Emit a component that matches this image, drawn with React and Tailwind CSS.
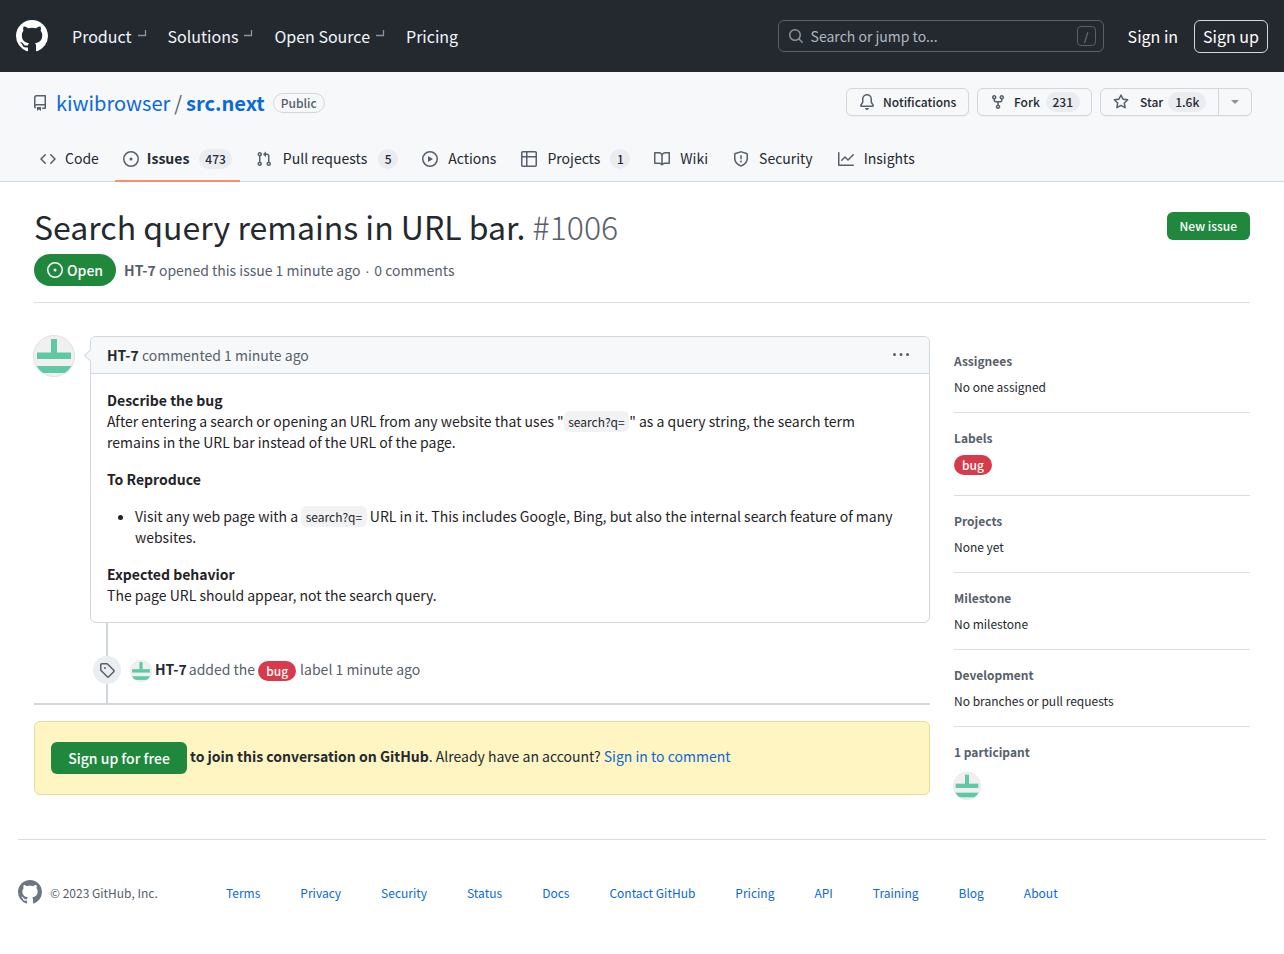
const P = {
  mark: "M8 0c4.42 0 8 3.58 8 8a8.013 8.013 0 0 1-5.45 7.59c-.4.08-.55-.17-.55-.38 0-.27.01-1.13.01-2.2 0-.75-.25-1.23-.54-1.48 1.78-.2 3.65-.88 3.65-3.95 0-.88-.31-1.59-.82-2.15.08-.2.36-1.02-.08-2.12 0 0-.67-.22-2.2.82-.64-.18-1.32-.27-2-.27-.68 0-1.36.09-2 .27-1.53-1.03-2.2-.82-2.2-.82-.44 1.1-.16 1.92-.08 2.12-.51.56-.82 1.28-.82 2.15 0 3.06 1.86 3.75 3.64 3.95-.23.2-.44.55-.51 1.07-.46.21-1.61.55-2.33-.66-.15-.24-.6-.83-1.23-.82-.67.01-.27.38.01.53.34.19.73.9.82 1.13.16.45.68 1.31 2.69.94 0 .67.01 1.3.01 1.49 0 .21-.15.45-.55.38A7.995 7.995 0 0 1 0 8c0-4.42 3.58-8 8-8Z",
  repo: "M2 2.5A2.5 2.5 0 0 1 4.5 0h8.75a.75.75 0 0 1 .75.75v12.5a.75.75 0 0 1-.75.75h-2.5a.75.75 0 0 1 0-1.5h1.75v-2h-8a1 1 0 0 0-.714 1.7.75.75 0 1 1-1.072 1.05A2.495 2.495 0 0 1 2 11.5Zm10.5-1h-8a1 1 0 0 0-1 1v6.708A2.486 2.486 0 0 1 4.5 9h8ZM5 12.25a.25.25 0 0 1 .25-.25h3.5a.25.25 0 0 1 .25.25v3.25a.25.25 0 0 1-.4.2l-1.45-1.087a.249.249 0 0 0-.3 0L5.4 15.7a.25.25 0 0 1-.4-.2Z",
  bell: "M8 16a2 2 0 0 0 1.985-1.75c.017-.137-.097-.25-.235-.25h-3.5c-.138 0-.252.113-.235.25A2 2 0 0 0 8 16ZM3 5a5 5 0 0 1 10 0v2.947c0 .05.015.098.042.139l1.703 2.555A1.519 1.519 0 0 1 13.482 13H2.518a1.516 1.516 0 0 1-1.263-2.36l1.703-2.554A.255.255 0 0 0 3 7.947Zm5-3.5A3.5 3.5 0 0 0 4.5 5v2.947c0 .346-.102.683-.294.97l-1.703 2.556a.017.017 0 0 0-.003.01l.001.006c0 .002.002.004.004.006l.006.004.007.001h10.964l.007-.001.006-.004.004-.006.001-.007a.017.017 0 0 0-.003-.01l-1.703-2.554a1.745 1.745 0 0 1-.294-.97V5A3.5 3.5 0 0 0 8 1.5Z",
  fork: "M5 5.372v.878c0 .414.336.75.75.75h4.5a.75.75 0 0 0 .75-.75v-.878a2.25 2.25 0 1 1 1.5 0v.878a2.25 2.25 0 0 1-2.25 2.25h-1.5v2.128a2.251 2.251 0 1 1-1.5 0V8.5h-1.5A2.25 2.25 0 0 1 3.5 6.25v-.878a2.25 2.25 0 1 1 1.5 0ZM5 3.25a.75.75 0 1 0-1.5 0 .75.75 0 0 0 1.5 0Zm6.75.75a.75.75 0 1 0 0-1.5.75.75 0 0 0 0 1.5Zm-3 8.75a.75.75 0 1 0-1.5 0 .75.75 0 0 0 1.5 0Z",
  star: "M8 .25a.75.75 0 0 1 .673.418l1.882 3.815 4.21.612a.75.75 0 0 1 .416 1.279l-3.046 2.97.719 4.192a.751.751 0 0 1-1.088.791L8 12.347l-3.766 1.98a.75.75 0 0 1-1.088-.79l.72-4.194L.818 6.374a.75.75 0 0 1 .416-1.28l4.21-.611L7.327.668A.75.75 0 0 1 8 .25Zm0 2.445L6.615 5.5a.75.75 0 0 1-.564.41l-3.097.45 2.24 2.184a.75.75 0 0 1 .216.664l-.528 3.084 2.769-1.456a.75.75 0 0 1 .698 0l2.77 1.456-.53-3.084a.75.75 0 0 1 .216-.664l2.24-2.183-3.096-.45a.75.75 0 0 1-.564-.41L8 2.694Z",
  code: "m11.28 3.22 4.25 4.25a.75.75 0 0 1 0 1.06l-4.25 4.25a.749.749 0 0 1-1.275-.326.749.749 0 0 1 .215-.734L13.94 8l-3.72-3.72a.749.749 0 0 1 .326-1.275.749.749 0 0 1 .734.215Zm-6.56 0a.751.751 0 0 1 1.042.018.751.751 0 0 1 .018 1.042L2.06 8l3.72 3.72a.749.749 0 0 1-.326 1.275.749.749 0 0 1-.734-.215L.47 8.53a.75.75 0 0 1 0-1.06Z",
  issue: "M8 9.5a1.5 1.5 0 1 0 0-3 1.5 1.5 0 0 0 0 3ZM8 0a8 8 0 1 1 0 16A8 8 0 0 1 8 0ZM1.5 8a6.5 6.5 0 1 0 13 0 6.5 6.5 0 0 0-13 0Z",
  pull: "M1.5 3.25a2.25 2.25 0 1 1 3 2.122v5.256a2.251 2.251 0 1 1-1.5 0V5.372A2.25 2.25 0 0 1 1.5 3.25Zm5.677-.177L9.573.677A.25.25 0 0 1 10 .854V2.5h1A2.5 2.5 0 0 1 13.5 5v5.628a2.251 2.251 0 1 1-1.5 0V5a1 1 0 0 0-1-1h-1v1.646a.25.25 0 0 1-.427.177L7.177 3.427a.25.25 0 0 1 0-.354ZM3.75 2.5a.75.75 0 1 0 0 1.5.75.75 0 0 0 0-1.5Zm0 9.5a.75.75 0 1 0 0 1.5.75.75 0 0 0 0-1.5Zm8.25.75a.75.75 0 1 0 1.5 0 .75.75 0 0 0-1.5 0Z",
  play: "M8 0a8 8 0 1 1 0 16A8 8 0 0 1 8 0ZM1.5 8a6.5 6.5 0 1 0 13 0 6.5 6.5 0 0 0-13 0Zm4.879-2.773 4.264 2.559a.25.25 0 0 1 0 .428l-4.264 2.559A.25.25 0 0 1 6 10.559V5.442a.25.25 0 0 1 .379-.215Z",
  table: "M0 1.75C0 .784.784 0 1.75 0h12.5C15.216 0 16 .784 16 1.75v12.5A1.75 1.75 0 0 1 14.25 16H1.75A1.75 1.75 0 0 1 0 14.25ZM6.5 6.5v8h7.75a.25.25 0 0 0 .25-.25V6.5Zm8-1.5V1.75a.25.25 0 0 0-.25-.25H6.5V5Zm-13 1.5v7.75c0 .138.112.25.25.25H5v-8ZM5 5V1.5H1.75a.25.25 0 0 0-.25.25V5Z",
  book: "M0 1.75A.75.75 0 0 1 .75 1h4.253c1.227 0 2.317.59 3 1.501A3.743 3.743 0 0 1 11.006 1h4.245a.75.75 0 0 1 .75.75v10.5a.75.75 0 0 1-.75.75h-4.507a2.25 2.25 0 0 0-1.591.659l-.622.621a.75.75 0 0 1-1.06 0l-.622-.621A2.25 2.25 0 0 0 5.258 13H.75a.75.75 0 0 1-.75-.75Zm7.251 10.324.004-5.073-.002-2.253A2.25 2.25 0 0 0 5.003 2.5H1.5v9h3.757a3.75 3.75 0 0 1 1.994.574ZM8.755 4.75l-.004 7.322a3.752 3.752 0 0 1 1.992-.572H14.5v-9h-3.495a2.25 2.25 0 0 0-2.25 2.25Z",
  shield: "M7.467.133a1.748 1.748 0 0 1 1.066 0l5.25 1.68A1.75 1.75 0 0 1 15 3.48V7c0 1.566-.32 3.182-1.303 4.682-.983 1.498-2.585 2.813-5.032 3.855a1.697 1.697 0 0 1-1.33 0c-2.447-1.042-4.049-2.357-5.032-3.855C1.32 10.182 1 8.566 1 7V3.48a1.75 1.75 0 0 1 1.217-1.667Zm.61 1.429a.25.25 0 0 0-.153 0l-5.25 1.68a.25.25 0 0 0-.174.238V7c0 1.358.275 2.666 1.057 3.86.784 1.194 2.121 2.34 4.366 3.297a.196.196 0 0 0 .154 0c2.245-.956 3.582-2.104 4.366-3.298C13.225 9.666 13.5 8.36 13.5 7V3.48a.251.251 0 0 0-.174-.237l-5.25-1.68ZM8.75 4.75v3a.75.75 0 0 1-1.5 0v-3a.75.75 0 0 1 1.5 0ZM9 10.5a1 1 0 1 1-2 0 1 1 0 0 1 2 0Z",
  graph: "M1.5 1.75V13.5h13.75a.75.75 0 0 1 0 1.5H.75a.75.75 0 0 1-.75-.75V1.75a.75.75 0 0 1 1.5 0Zm14.28 2.53-5.25 5.25a.75.75 0 0 1-1.06 0L7 7.06 4.28 9.78a.751.751 0 0 1-1.042-.018.751.751 0 0 1-.018-1.042l3.25-3.25a.75.75 0 0 1 1.06 0L10 7.94l4.72-4.72a.751.751 0 0 1 1.042.018.751.751 0 0 1 .018 1.042Z",
  tag: "M1 7.775V2.75C1 1.784 1.784 1 2.75 1h5.025c.464 0 .91.184 1.238.513l6.25 6.25a1.75 1.75 0 0 1 0 2.474l-5.026 5.026a1.75 1.75 0 0 1-2.474 0l-6.25-6.25A1.752 1.752 0 0 1 1 7.775Zm1.5 0c0 .066.026.13.073.177l6.25 6.25a.25.25 0 0 0 .354 0l5.025-5.025a.25.25 0 0 0 0-.354l-6.25-6.25a.25.25 0 0 0-.177-.073H2.75a.25.25 0 0 0-.25.25ZM6 5a1 1 0 1 1 0 2 1 1 0 0 1 0-2Z",
  search: "M10.68 11.74a6 6 0 0 1-7.922-8.982 6 6 0 0 1 8.982 7.922l3.04 3.04a.749.749 0 0 1-.326 1.275.749.749 0 0 1-.734-.215ZM11.5 7a4.499 4.499 0 1 0-8.997 0A4.499 4.499 0 0 0 11.5 7Z",
  kebab: "M8 9a1.5 1.5 0 1 0 0-3 1.5 1.5 0 0 0 0 3ZM1.5 9a1.5 1.5 0 1 0 0-3 1.5 1.5 0 0 0 0 3Zm13 0a1.5 1.5 0 1 0 0-3 1.5 1.5 0 0 0 0 3Z",
};

function Oct({ d, size = 16, className = "" }) {
  return (
    <svg viewBox="0 0 16 16" width={size} height={size} fill="currentColor" className={"shrink-0 " + className}>
      <path d={P[d]} fillRule="evenodd" />
    </svg>
  );
}

function Avatar({ size, className = "" }) {
  return (
    <svg viewBox="0 0 42 42" width={size} height={size} className={"shrink-0 " + className}>
      <defs>
        <clipPath id="avclip"><circle cx="21" cy="21" r="20" /></clipPath>
      </defs>
      <circle cx="21" cy="21" r="20.5" fill="#f0f0f0" stroke="#dfe2e5" />
      <g clipPath="url(#avclip)" fill="#5ec9a3">
        <rect x="18" y="4" width="6" height="14" />
        <rect x="4" y="17.5" width="34" height="6.5" />
        <rect x="0" y="31" width="42" height="7" />
      </g>
    </svg>
  );
}

function Caret() {
  return (
    <svg viewBox="0 0 10 10" width="10" height="10" className="shrink-0 ml-[5px] -mt-[6px] text-[#8b949e]" fill="none" stroke="currentColor" strokeWidth="1.3">
      <path d="M1 7.5h7.5V2" />
    </svg>
  );
}

function Counter({ children, className = "" }) {
  return (
    <span className={"inline-flex items-center justify-center h-[20px] min-w-[20px] rounded-full bg-[#eaecef] px-[6px] text-[12px] font-medium text-[#24292f] " + className}>
      {children}
    </span>
  );
}

function Tab({ icon, label, count, active, className = "", iconClass = "mr-[10px]", countClass = "ml-[10px]" }) {
  return (
    <div className={"relative flex items-center h-full px-2 text-[14px] text-[#24292f] " + className}>
      <Oct d={icon} className={"text-[#57606a] " + iconClass} />
      <span className={active ? "font-semibold" : ""}>{label}</span>
      {count && <Counter className={countClass}>{count}</Counter>}
      {active && <span className="absolute left-0 right-0 -bottom-px h-[2px] bg-[#fd8c73]" />}
    </div>
  );
}

function Section({ title, children, last }) {
  return (
    <div className={"pt-4 " + (last ? "" : "pb-4 border-b border-[#d8dee4]")}>
      <div className="text-[12px] leading-[18px] font-semibold text-[#57606a] mb-2">{title}</div>
      {children}
    </div>
  );
}

function Code({ children }) {
  return <code className="rounded-[6px] bg-[#f0f2f4] px-[4.5px] py-[2px] text-[12px] leading-[16px] font-[inherit]">{children}</code>;
}

function Bug({ className = "" }) {
  return <span className={"inline-flex items-center justify-center h-[20px] w-[38px] rounded-full bg-[#d73a4a] text-white text-[12px] font-medium " + className}>bug</span>;
}

export default function App() {
  const footer = ["Terms", "Privacy", "Security", "Status", "Docs", "Contact GitHub", "Pricing", "API", "Training", "Blog", "About"];
  return (
    <div className="min-h-[954px] bg-white text-[#24292f] text-[14px]" style={{ fontFamily: '"Noto Sans CJK SC", "Noto Sans CJK JP", sans-serif' }}>
      <header className="flex items-center h-[72px] bg-[#24292f] pl-4 pr-4 text-white">
        <Oct d="mark" size={32} />
        <nav className="flex items-center ml-6 gap-[21px] text-[16px] text-[#f0f6fc]">
          <span className="flex items-center">Product<Caret /></span>
          <span className="flex items-center">Solutions<Caret /></span>
          <span className="flex items-center">Open Source<Caret /></span>
          <span>Pricing</span>
        </nav>
        <div className="ml-auto flex items-center w-[326px] h-[32px] rounded-[6px] border border-[#57606a] pl-[9px] pr-[7px] text-[14px] text-[#afb8c1]">
          <Oct d="search" className="text-[#8b949e] mr-[7px]" />
          <span>Search or jump to...</span>
          <span className="ml-auto flex items-center justify-center w-[19px] h-[20px] rounded-[4px] border border-[#57606a] text-[11px] text-[#8b949e]">/</span>
        </div>
        <span className="ml-6 text-[16px]">Sign in</span>
        <span className="ml-4 flex items-center h-[33px] px-2 rounded-[6px] border border-[#d0d7de] text-[16px]">Sign up</span>
      </header>

      <div className="bg-[#f6f8fa] border-b border-[#d0d7de] h-[110px] flex flex-col">
        <div className="flex items-start pt-4 pl-8 pr-8 h-[64px]">
          <div className="flex items-center h-[30px]">
            <Oct d="repo" className="text-[#57606a] mr-2" />
            <span className="text-[20px] text-[#0969da]">kiwibrowser</span>
            <span className="text-[20px] text-[#57606a] mx-[4px]">/</span>
            <span className="text-[20px] font-semibold text-[#0969da]">src.next</span>
            <span className="ml-2 flex items-center h-[20px] px-[7px] rounded-full border border-[#d0d7de] text-[12px] font-medium text-[#57606a]">Public</span>
          </div>
          <div className="ml-auto flex items-center gap-2 text-[12px] font-medium">
            <div className="flex items-center h-[28px] w-[123px] pl-3 rounded-[6px] border border-[#d0d7de] bg-[#f6f8fa] shadow-[0_1px_0_rgba(27,31,36,0.04)]">
              <Oct d="bell" className="text-[#57606a] mr-2" />Notifications
            </div>
            <div className="flex items-center h-[28px] w-[115px] pl-3 rounded-[6px] border border-[#d0d7de] bg-[#f6f8fa] shadow-[0_1px_0_rgba(27,31,36,0.04)]">
              <Oct d="fork" className="text-[#57606a] mr-2" />Fork<Counter className="ml-[6px] w-[34px]">231</Counter>
            </div>
            <div className="flex items-center h-[28px] w-[152px] rounded-[6px] border border-[#d0d7de] bg-[#f6f8fa] shadow-[0_1px_0_rgba(27,31,36,0.04)]">
              <div className="flex items-center flex-1 pl-3 h-full border-r border-[#d0d7de]">
                <Oct d="star" className="text-[#57606a] mr-[11px]" />Star<Counter className="ml-[5px] w-[38px]">1.6k</Counter>
              </div>
              <div className="w-[32px] flex justify-center">
                <span className="w-0 h-0 border-x-[4px] border-x-transparent border-t-[4px] border-t-[#8c959f]" />
              </div>
            </div>
          </div>
        </div>
        <nav className="flex items-center pl-[32px] h-[45px] gap-2">
          <Tab icon="code" label="Code" iconClass="mr-[9px]" />
          <Tab icon="issue" label="Issues" count="473" active iconClass="mr-2" />
          <Tab icon="pull" label="Pull requests" count="5" iconClass="mr-[11px]" countClass="ml-[11px]" />
          <Tab icon="play" label="Actions" className="mr-px" />
          <Tab icon="table" label="Projects" count="1" />
          <Tab icon="book" label="Wiki" className="mr-px" />
          <Tab icon="shield" label="Security" className="mr-px" />
          <Tab icon="graph" label="Insights" />
        </nav>
      </div>

      <main className="px-[34px]">
        <div className="flex items-start pt-[22px]">
          <h1 className="text-[32px] leading-[44px] font-normal text-[#24292f]">
            Search query remains in URL bar. <span className="font-light text-[#57606a]">#1006</span>
          </h1>
          <span className="ml-auto mt-[8px] flex items-center h-[28px] px-[13px] rounded-[6px] bg-[#1f883d] text-white text-[12px] font-medium">New issue</span>
        </div>
        <div className="flex items-center mt-[6px] pb-4 border-b border-[#d8dee4]">
          <span className="flex items-center h-[32px] px-[13px] rounded-full bg-[#1f883d] text-white text-[14px] font-medium">
            <Oct d="issue" className="mr-1" />Open
          </span>
          <span className="ml-2 pt-[2px] text-[#57606a]">
            <b className="font-semibold">HT-7</b> opened this issue 1 minute ago <span className="mx-[1.5px] font-['Liberation_Sans']">·</span> 0 comments
          </span>
        </div>

        <div className="flex items-start gap-6 pt-[33px]">
          <div className="w-[896px] shrink-0">
            <div className="flex items-start">
              <Avatar size={42} className="-mt-px -ml-px" />
              <div className="relative ml-[15px] flex-1 rounded-[6px] border border-[#d0d7de] bg-white">
                <span className="absolute -left-[5px] top-[14px] w-[9px] h-[9px] rotate-45 bg-[#f6f8fa] border-l border-b border-[#d0d7de]" />
                <div className="flex items-center h-[37px] pl-4 pr-4 bg-[#f6f8fa] border-b border-[#d0d7de] rounded-t-[6px] text-[#57606a]">
                  <span><b className="font-semibold text-[#24292f]">HT-7</b> commented 1 minute ago</span>
                  <Oct d="kebab" className="ml-auto text-[#57606a] mr-[4px]" />
                </div>
                <div className="px-4 py-4 text-[14px] leading-[21px] text-[#1f2328]">
                  <p className="mb-4 pr-3"><b className="font-semibold">Describe the bug</b><br />After entering a search or opening an URL from any website that uses "<Code>search?q=</Code>" as a query string, the search term remains in the URL bar instead of the URL of the page.</p>
                  <p className="mb-4 font-semibold">To Reproduce</p>
                  <ul className="list-disc pl-[28px] mb-4">
                    <li>Visit any web page with a <Code>search?q=</Code> URL in it. This includes Google, Bing, but also the internal search feature of many websites.</li>
                  </ul>
                  <p><b className="font-semibold">Expected behavior</b><br />The page URL should appear, not the search query.</p>
                </div>
              </div>
            </div>

            <div className="ml-[56px]">
              <div className="ml-[16px] w-[2px] h-[33px] bg-[#d0d7de]" />
              <div className="flex items-center h-[28px] ml-[3px] text-[#57606a]">
                <span className="flex items-center justify-center w-[28px] h-[28px] rounded-full bg-[#eaeef2] text-[#57606a]"><Oct d="tag" /></span>
                <Avatar size={22} className="ml-[9px] mr-[3px] mt-[2px]" />
                <b className="font-semibold text-[#24292f] -mt-[2px]">HT-7</b>
                <span className="ml-[2px] -mt-[2px]">added the</span>
                <Bug className="ml-[3px] mt-[1px]" />
                <span className="ml-1 -mt-[2px]">label 1 minute ago</span>
              </div>
              <div className="ml-[16px] w-[2px] h-[19px] bg-[#d0d7de]" />
            </div>
            <div className="h-[2px] bg-[#d0d7de]" />
            <div className="mt-[16px] flex items-center h-[74px] rounded-[6px] border border-[#e8dc9a] bg-[#fff5c2] pl-4">
              <span className="flex items-center justify-center w-[136px] h-[32px] rounded-[6px] bg-[#1f883d] text-white font-medium mr-[3px] pt-[1px]">Sign up for free</span>
              <span className="-mt-[3px]"><b className="font-semibold">to join this conversation on GitHub</b>. Already have an account? <span className="text-[#0969da]">Sign in to comment</span></span>
            </div>
          </div>

          <aside className="flex-1 text-[12px] leading-[18px] text-[#24292f]">
            <Section title="Assignees"><div>No one assigned</div></Section>
            <Section title="Labels"><div className="h-[24px]"><Bug /></div></Section>
            <Section title="Projects"><div>None yet</div></Section>
            <Section title="Milestone"><div>No milestone</div></Section>
            <Section title="Development"><div>No branches or pull requests</div></Section>
            <Section title="1 participant" last><div className="pt-[3px]"><Avatar size={28} className="-ml-px" /></div></Section>
          </aside>
        </div>
      </main>

      <footer className="mx-[18px] mt-[39px] border-t border-[#d8dee4] pt-[42px] flex items-center text-[12px]">
        <Oct d="mark" size={24} className="text-[#6e7781] -mt-[2px]" />
        <span className="ml-2 text-[#57606a] w-[176px]">© 2023 GitHub, Inc.</span>
        <div className="flex items-center gap-10 text-[#0969da]">
          {footer.map((f) => <span key={f}>{f}</span>)}
        </div>
      </footer>
    </div>
  );
}
